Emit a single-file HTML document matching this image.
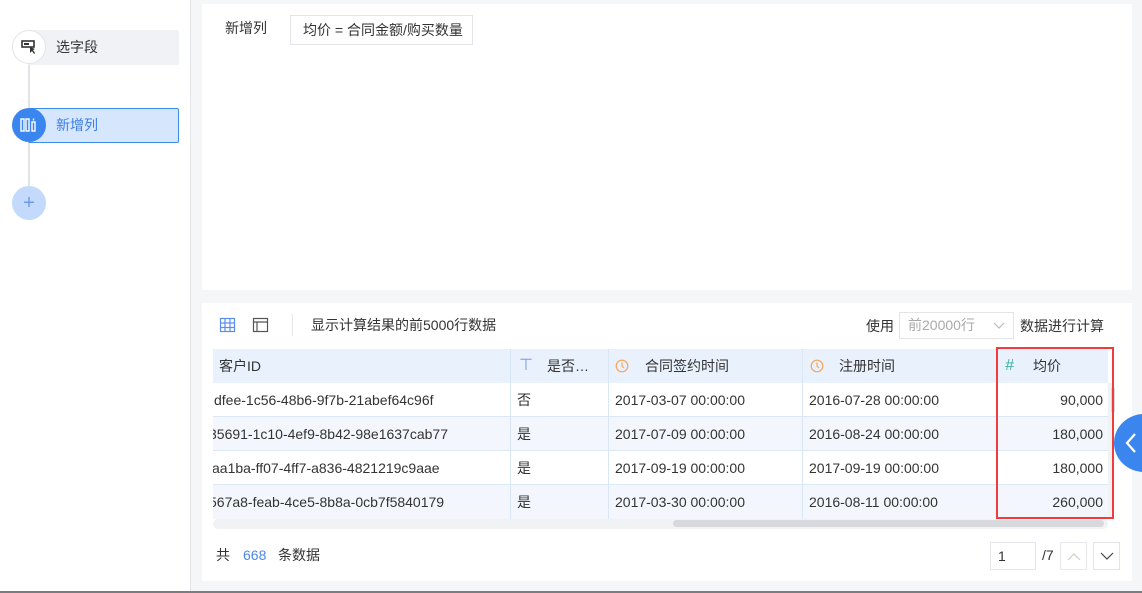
<!DOCTYPE html>
<html><head><meta charset="utf-8">
<style>
*{margin:0;padding:0;box-sizing:border-box}
body{width:1142px;height:593px;overflow:hidden;background:#f5f6f8;font-family:"Liberation Sans","Noto Sans CJK SC",sans-serif;font-size:14px;color:#333;position:relative}
.abs{position:absolute}
.side{left:0;top:0;width:191px;height:593px;background:#fff;border-right:1px solid #e4e6ea}
.circ{width:34px;height:34px;border-radius:50%;left:12px}
.cell{position:absolute;height:34px;line-height:34px;white-space:nowrap;overflow:hidden}
.idc{position:absolute;left:213px;width:296px;height:34px;overflow:hidden}
.idc span{position:absolute;line-height:34px;white-space:nowrap}
</style></head><body>
<div class="abs side"></div>
<div class="abs" style="left:28px;top:62px;width:2px;height:126px;background:#e2e4e8"></div>
<div class="abs" style="left:28px;top:30px;width:151px;height:35px;background:#f1f2f5;border-radius:2px"></div>
<div class="abs" style="left:56px;top:38px;line-height:18px">选字段</div>
<div class="abs circ" style="top:30px;background:#fff;border:1px solid #e2e4e8"></div>
<svg class="abs" style="left:20px;top:39px" width="18" height="16" viewBox="0 0 18 16"><rect x="2" y="2" width="12" height="6" fill="none" stroke="#333" stroke-width="1.6"/><rect x="4" y="4" width="5" height="2" fill="#333"/><path d="M10 8 L10 14 L12 12 L14 15 L15 14 L13 11 L15 10Z" fill="#333"/></svg>
<div class="abs" style="left:28px;top:108px;width:151px;height:35px;background:#d6e6fd;border:1px solid #3b8af0;border-radius:2px"></div>
<div class="abs" style="left:56px;top:116px;line-height:18px;color:#3b7fe6">新增列</div>
<div class="abs circ" style="top:108px;background:#3b86ee"></div>
<svg class="abs" style="left:19px;top:117px" width="20" height="16" viewBox="0 0 20 16"><g fill="none" stroke="#fff" stroke-width="1.4"><rect x="2" y="2" width="3" height="12"/><rect x="7" y="2" width="3" height="12"/><rect x="13" y="5" width="3" height="9"/><path d="M14.5 1.5v2"/></g></svg>
<div class="abs circ" style="top:186px;background:#c3dafc"></div>
<div class="abs" style="left:12px;top:186px;width:34px;line-height:34px;text-align:center;color:#6d9ae8;font-size:20px">+</div>

<div class="abs" style="left:202px;top:4px;width:930px;height:286px;background:#fff"></div>
<div class="abs" style="left:225px;top:19px;line-height:18px">新增列</div>
<div class="abs" style="left:290px;top:15px;width:183px;height:30px;border:1px solid #e2e4e8;line-height:28px;padding-left:12px;white-space:nowrap">均价 = 合同金额/购买数量</div>

<div class="abs" style="left:202px;top:303px;width:930px;height:278px;background:#fff"></div>
<svg class="abs" style="left:219px;top:317px" width="18" height="16" viewBox="0 0 18 16"><g fill="none" stroke="#5b8ef0" stroke-width="1.2"><rect x="1.5" y="1.5" width="14" height="13"/><path d="M1.5 6h14M1.5 10.5h14M6 1.5v13M11 1.5v13"/></g></svg>
<svg class="abs" style="left:252px;top:317px" width="18" height="16" viewBox="0 0 18 16"><g fill="none" stroke="#555" stroke-width="1.2"><rect x="1.5" y="1.5" width="14" height="13"/><path d="M1.5 5h14M5 5v9.5"/></g></svg>
<div class="abs" style="left:292px;top:314px;width:1px;height:22px;background:#e4e6ea"></div>
<div class="abs" style="left:311px;top:316px;line-height:18px">显示计算结果的前5000行数据</div>
<div class="abs" style="left:866px;top:317px;line-height:18px">使用</div>
<div class="abs" style="left:899px;top:312px;width:115px;height:27px;border:1px solid #e2e4e8;line-height:25px;padding-left:8px;color:#aaa">前20000行<svg style="position:absolute;right:8px;top:9px" width="12" height="8" viewBox="0 0 12 8"><path d="M1 1l5 5 5-5" fill="none" stroke="#bbb" stroke-width="1.2"/></svg></div>
<div class="abs" style="left:1020px;top:317px;line-height:18px">数据进行计算</div>

<div class="abs" style="left:213px;top:349px;width:895px;height:34px;background:#e8f1fc"></div>
<div class="abs" style="left:213px;top:417px;width:895px;height:34px;background:#f3f7fd"></div>
<div class="abs" style="left:213px;top:485px;width:895px;height:34px;background:#f3f7fd"></div>
<div class="abs" style="left:213px;top:416px;width:895px;height:1px;background:#dde8f7"></div>
<div class="abs" style="left:213px;top:450px;width:895px;height:1px;background:#dde8f7"></div>
<div class="abs" style="left:213px;top:484px;width:895px;height:1px;background:#dde8f7"></div>
<div class="abs" style="left:510px;top:349px;width:1px;height:170px;background:#d8e6f8"></div>
<div class="abs" style="left:608px;top:349px;width:1px;height:170px;background:#d8e6f8"></div>
<div class="abs" style="left:802px;top:349px;width:1px;height:170px;background:#d8e6f8"></div>
<div class="abs" style="left:996px;top:349px;width:1px;height:170px;background:#d8e6f8"></div>

<div class="cell" style="left:219px;top:349px">客户ID</div>
<div class="cell" style="left:519px;top:349px;color:#7a9ae8;font-size:16px">⊤</div>
<div class="cell" style="left:547px;top:349px">是否…</div>
<svg class="abs" style="left:615px;top:359px" width="14" height="14" viewBox="0 0 14 14"><circle cx="7" cy="7" r="5.8" fill="none" stroke="#f5a55a" stroke-width="1.2"/><path d="M7 3.5V7l2 2" fill="none" stroke="#f5a55a" stroke-width="1.2"/></svg>
<div class="cell" style="left:645px;top:349px">合同签约时间</div>
<svg class="abs" style="left:810px;top:359px" width="14" height="14" viewBox="0 0 14 14"><circle cx="7" cy="7" r="5.8" fill="none" stroke="#f5a55a" stroke-width="1.2"/><path d="M7 3.5V7l2 2" fill="none" stroke="#f5a55a" stroke-width="1.2"/></svg>
<div class="cell" style="left:839px;top:349px">注册时间</div>
<div class="cell" style="left:1005px;top:349px;color:#3bb5a6;font-size:16px;font-style:italic">#</div>
<div class="cell" style="left:1033px;top:349px">均价</div>

<div class="idc" style="top:383px"><span style="left:1px">dfee-1c56-48b6-9f7b-21abef64c96f</span></div>
<div class="idc" style="top:417px"><span style="left:-4px">35691-1c10-4ef9-8b42-98e1637cab77</span></div>
<div class="idc" style="top:451px"><span style="left:-1px">aa1ba-ff07-4ff7-a836-4821219c9aae</span></div>
<div class="idc" style="top:485px"><span style="left:-4px">567a8-feab-4ce5-8b8a-0cb7f5840179</span></div>
<div class="cell" style="left:517px;top:383px">否</div>
<div class="cell" style="left:517px;top:417px">是</div>
<div class="cell" style="left:517px;top:451px">是</div>
<div class="cell" style="left:517px;top:485px">是</div>
<div class="cell" style="left:615px;top:383px">2017-03-07 00:00:00</div>
<div class="cell" style="left:615px;top:417px">2017-07-09 00:00:00</div>
<div class="cell" style="left:615px;top:451px">2017-09-19 00:00:00</div>
<div class="cell" style="left:615px;top:485px">2017-03-30 00:00:00</div>
<div class="cell" style="left:809px;top:383px">2016-07-28 00:00:00</div>
<div class="cell" style="left:809px;top:417px">2016-08-24 00:00:00</div>
<div class="cell" style="left:809px;top:451px">2017-09-19 00:00:00</div>
<div class="cell" style="left:809px;top:485px">2016-08-11 00:00:00</div>
<div class="cell" style="left:1000px;top:383px;width:103px;text-align:right">90,000</div>
<div class="cell" style="left:1000px;top:417px;width:103px;text-align:right">180,000</div>
<div class="cell" style="left:1000px;top:451px;width:103px;text-align:right">180,000</div>
<div class="cell" style="left:1000px;top:485px;width:103px;text-align:right">260,000</div>

<div class="abs" style="left:1108px;top:383px;width:6px;height:136px;background:#f1f2f4"></div>
<div class="abs" style="left:1111px;top:387px;width:4px;height:26px;background:#d8d9dc;border-radius:2px"></div>
<div class="abs" style="left:213px;top:519px;width:895px;height:10px;background:#f1f2f4;border-radius:5px"></div>
<div class="abs" style="left:673px;top:520px;width:431px;height:7px;background:#d8d9dc;border-radius:4px"></div>
<div class="abs" style="left:996px;top:347px;width:118px;height:172px;border:2px solid #f03c3c"></div>

<div class="abs" style="left:1114px;top:414px;width:60px;height:58px;border-radius:50%;background:#3b86ee"></div>
<svg class="abs" style="left:1124px;top:432px" width="14" height="22" viewBox="0 0 14 22"><path d="M11 2L3 11l8 9" fill="none" stroke="#fff" stroke-width="2.2"/></svg>

<div class="abs" style="left:216px;top:546px;line-height:18px">共</div>
<div class="abs" style="left:243px;top:546px;line-height:18px;color:#4a87ea">668</div>
<div class="abs" style="left:278px;top:546px;line-height:18px">条数据</div>
<div class="abs" style="left:990px;top:542px;width:46px;height:28px;border:1px solid #e2e4e8;line-height:26px;padding-left:7px">1</div>
<div class="abs" style="left:1042px;top:546px;line-height:18px">/7</div>
<div class="abs" style="left:1060px;top:542px;width:27px;height:28px;border:1px solid #e8e9ec"><svg style="position:absolute;left:6px;top:9px" width="14" height="9" viewBox="0 0 14 9"><path d="M1 8l6-6 6 6" fill="none" stroke="#ccc" stroke-width="1.2"/></svg></div>
<div class="abs" style="left:1093px;top:542px;width:27px;height:28px;border:1px solid #e2e4e8"><svg style="position:absolute;left:6px;top:9px" width="14" height="9" viewBox="0 0 14 9"><path d="M1 1l6 6 6-6" fill="none" stroke="#444" stroke-width="1.2"/></svg></div>
<div class="abs" style="left:0;top:591px;width:1142px;height:2px;background:#7a7c80"></div>
</body></html>
